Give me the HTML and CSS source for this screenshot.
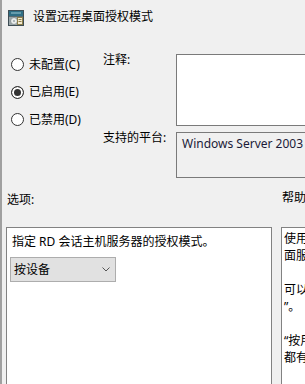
FILE: index.html
```html
<!DOCTYPE HTML>
<html lang="zh-CN">
  <head>
    <meta charset="UTF-8">
    <meta name="viewport" content="width=device-width, initial-scale=1">
    <title>设置远程桌面授权模式</title>
    <link rel="stylesheet" href="styles.css">
  </head>
  <body>
    <div class="dlg">
      <!-- title row -->
      <div class="hdr">
        <svg class="ico" width="16" height="16" viewBox="0 0 16 16">
          <rect x="0.5" y="0.5" width="15" height="15" fill="#9aa6aa" stroke="#3e4d55"/>
          <rect x="1" y="1" width="14" height="5" fill="#2f6e84"/>
          <rect x="3" y="2.5" width="10" height="1" fill="#9cc8d2"/>
          <rect x="1" y="6" width="14" height="1" fill="#5a6a70"/>
          <circle cx="6" cy="11" r="3.5" fill="#e9ecec" stroke="#8a9496"/>
          <circle cx="6" cy="11" r="1" fill="#9aa6aa"/>
          <rect x="9.5" y="7.5" width="5" height="7" fill="#f3ead0" stroke="#8c7f4c"/>
          <rect x="10.5" y="9" width="3" height="1" fill="#8c7f4c"/>
          <rect x="10.5" y="11" width="3" height="1" fill="#8c7f4c"/>
        </svg>
        <span class="title">设置远程桌面授权模式</span>
      </div>

      <div class="top">
        <div class="radios">
          <div class="radio"><span class="dot"></span>未配置(C)</div>
          <div class="radio on"><span class="dot"></span>已启用(E)</div>
          <div class="radio"><span class="dot"></span>已禁用(D)</div>
        </div>
        <div class="fields">
          <div class="lbl">注释:</div>
          <div class="box note"></div>
          <div class="lbl">支持的平台:</div>
          <div class="box plat">Windows Server 2003 操作系统或 Windows XP Professional</div>
        </div>
      </div>

      <div class="caps">
        <span class="cap">选项:</span>
        <span class="cap help-cap">帮助:</span>
      </div>

      <div class="panes">
        <div class="pane opts">
          <div class="desc">指定 RD 会话主机服务器的授权模式。</div>
          <div class="combo">
            <span>按设备</span>
            <svg width="8" height="5" viewBox="0 0 8 5"><path d="M0.5 0.5 L4 4 L7.5 0.5" fill="none" stroke="#555" stroke-width="1"/></svg>
          </div>
        </div>
        <div class="pane help">
          <div class="ln">使用此设置可以指定连接到此 RD 会话主机服务器所需的远程桌</div>
          <div class="ln">面服务客户端访问许可证(RDS CAL)的类型。</div>
          <div class="ln">&nbsp;</div>
          <div class="ln">可以使用此设置选择两种授权模式之一：“按用户”和“按设备</div>
          <div class="ln">”。</div>
          <div class="ln">&nbsp;</div>
          <div class="ln">“按用户”授权模式要求连接到此 RD 会话主机服务器的每个用户帐户</div>
          <div class="ln">都有 RDS 每用户 CAL。</div>
        </div>
      </div>
    </div>
  </body>
</html>
```

FILE: styles.css
```css
html, body {
  margin: 0;
  background: #f0f0f0;
}
body {
  font-family: "Noto Sans", "Noto Sans CJK SC", sans-serif;
  font-size: 12px;
  line-height: 16px;
  color: #000;
}
.dlg {
  width: 305px;
  height: 384px;
  box-sizing: border-box;
  border-left: 2px solid #a0a0a0;
  overflow: hidden;
  background: #f0f0f0;
}

/* header */
.hdr {
  display: flex;
  align-items: center;
  gap: 9px;
  height: 16px;
  padding: 10px 0 0 6px;
}
.ico { display: block; flex: none; }
.title { white-space: nowrap; margin-top: -2px; }

/* state + fields */
.top {
  display: flex;
  margin-top: 26px;
}
.radios {
  flex: none;
  width: 92px;
  padding-left: 9px;
  margin-top: -1px;
}
.radio {
  display: flex;
  align-items: center;
  gap: 5px;
  height: 27.5px;
  white-space: nowrap;
}
.dot {
  width: 13px;
  height: 13px;
  box-sizing: border-box;
  border: 1px solid #333;
  border-radius: 50%;
  background: #fff;
}
.radio.on .dot {
  background: #333;
  box-shadow: inset 0 0 0 2px #fff;
}
.fields {
  display: grid;
  grid-template-columns: 73px 200px;
  row-gap: 4px;
  flex: none;
}
.lbl { white-space: nowrap; }
.box {
  margin-top: 2px;
  border: 1px solid #7a7a7a;
  box-sizing: border-box;
}
.note {
  height: 72px;
  background: #fff;
}
.plat {
  height: 46px;
  padding: 3px 0 0 5px;
  white-space: nowrap;
  overflow: hidden;
  color: #1b1b38;
}

/* section captions */
.caps {
  display: grid;
  grid-template-columns: 266px 100px;
  column-gap: 9px;
  padding-left: 4px;
  margin-top: 14px;
}
.cap { padding-left: 1px; white-space: nowrap; }
.help-cap { margin-top: -2px; }

/* bottom panes */
.panes {
  display: grid;
  grid-template-columns: 266px 100px;
  column-gap: 9px;
  padding-left: 4px;
  margin-top: 19px;
}
.pane {
  height: 200px;
  box-sizing: border-box;
  border: 1px solid #828282;
  background: #fff;
  overflow: hidden;
}
.opts { padding: 6px 0 0 5px; }
.desc { white-space: nowrap; }
.combo {
  display: flex;
  align-items: center;
  justify-content: space-between;
  width: 106px;
  height: 25px;
  box-sizing: border-box;
  margin: 7px 0 0 -2px;
  padding: 0 5px 0 3px;
  background: #e1e1e1;
  border: 1px solid #adadad;
}
.combo svg { display: block; }
.help {
  padding: 2px 0 0 2px;
  line-height: 17px;
}
.ln { white-space: nowrap; }
```
